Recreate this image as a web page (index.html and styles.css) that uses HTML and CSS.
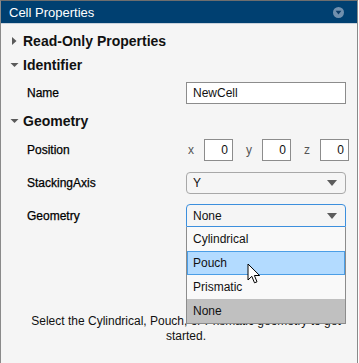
FILE: index.html
```html
<!DOCTYPE html>
<html>
<head>
<meta charset="utf-8">
<link rel="stylesheet" href="styles.css">
</head>
<body>
<div class="panel">
  <div class="titlebar">
    <span class="title">Cell Properties</span>
    <svg class="title-icon" width="11" height="11" viewBox="0 0 11 11"><circle cx="5.5" cy="5.5" r="5.5" fill="#7190ae"/><path d="M2.6 3.8 L8.4 3.8 L5.5 7.6 Z" fill="#0e3d68"/></svg>
  </div>
  <div class="content">
    <div class="section-head">
      <svg class="caret" width="10" height="10" viewBox="0 0 10 10"><path d="M2 1 L6.5 5 L2 9 Z" fill="#5a5a5a"/></svg>
      <span>Read-Only Properties</span>
    </div>
    <div class="section-head">
      <svg class="caret" width="10" height="10" viewBox="0 0 10 10"><path d="M0.5 3 L8.5 3 L4.5 7 Z" fill="#5a5a5a"/></svg>
      <span>Identifier</span>
    </div>
    <div class="row row-name">
      <span class="label">Name</span>
      <div class="textbox">NewCell</div>
    </div>
    <div class="section-head section-geo">
      <svg class="caret" width="10" height="10" viewBox="0 0 10 10"><path d="M0.5 3 L8.5 3 L4.5 7 Z" fill="#5a5a5a"/></svg>
      <span>Geometry</span>
    </div>
    <div class="row row-pos">
      <span class="label">Position</span>
      <div class="xyz">
        <span class="axis">x</span><div class="numbox">0</div>
        <span class="axis">y</span><div class="numbox">0</div>
        <span class="axis">z</span><div class="numbox">0</div>
      </div>
    </div>
    <div class="row row-stack">
      <span class="label">StackingAxis</span>
      <div class="select">
        <span>Y</span>
        <svg width="10" height="8" viewBox="0 0 10 8"><path d="M0 1 L10 1 L5 7 Z" fill="#5c5c5c"/></svg>
      </div>
    </div>
    <div class="row row-geom">
      <span class="label">Geometry</span>
      <div class="select-wrap">
        <div class="select open">
          <span>None</span>
          <svg width="10" height="8" viewBox="0 0 10 8"><path d="M0 1 L10 1 L5 7 Z" fill="#5c5c5c"/></svg>
        </div>
        <ul class="menu">
          <li>Cylindrical</li>
          <li class="hover">Pouch</li>
          <li>Prismatic</li>
          <li class="selected">None</li>
        </ul>
        <svg class="cursor" width="14" height="22" viewBox="0 0 14 22"><path d="M1 1 L1 17 L4.8 13.3 L7.5 19.8 L10 18.8 L7.4 12.5 L12.6 12.5 Z" fill="#ffffff" stroke="#000000" stroke-width="1" stroke-linejoin="miter"/></svg>
      </div>
    </div>
    <p class="message">Select the Cylindrical, Pouch, or Prismatic geometry to get started.</p>
  </div>
</div>
</body>
</html>
```

FILE: styles.css
```css
html, body {
  margin: 0;
  padding: 0;
  background: #ffffff;
}
body {
  font-family: "Liberation Sans", Arial, sans-serif;
  color: #111111;
}
.panel {
  width: 356px;
  height: 362px;
  border-top: 1px solid #6e6e6e;
  border-left: 1px solid #8a8a8a;
  border-right: 1px solid #8a8a8a;
  background: #f5f5f5;
  overflow: hidden;
}
.titlebar {
  height: 22px;
  background: #004071;
  display: flex;
  align-items: center;
  justify-content: space-between;
  padding: 0 13px 0 8px;
  border-bottom: 1px solid #c9d2dc;
}
.title {
  color: #ffffff;
  font-size: 13px;
}
.title-icon {
  display: block;
}
.content {
  padding-top: 5px;
}
.section-head {
  height: 24px;
  display: flex;
  align-items: center;
  font-size: 14px;
  font-weight: bold;
  color: #111111;
  padding-left: 9px;
}
.caret {
  display: block;
  width: 10px;
  margin-right: 3px;
}
.row {
  display: flex;
  align-items: center;
  height: 22px;
  font-size: 12px;
}
.label {
  width: 159px;
  padding-left: 26px;
  color: #000000;
  -webkit-text-stroke: 0.25px #000000;
}
.row-name { margin-top: 5px; }
.section-geo { margin-top: 5px; }
.row-pos { margin-top: 6px; }
.row-stack { margin-top: 11px; }
.row-geom { margin-top: 10px; height: 23px; }
.textbox {
  width: 152px;
  height: 20px;
  border: 1px solid #8c8c8c;
  background: #ffffff;
  display: flex;
  align-items: center;
  padding-left: 6px;
  color: #111111;
}
.xyz {
  display: flex;
  align-items: center;
}
.axis {
  width: 16px;
  padding-left: 2px;
  color: #555555;
  font-size: 12px;
}
.axis + .numbox { margin-right: 11px; }
.numbox {
  width: 23px;
  height: 20px;
  border: 1px solid #8c8c8c;
  background: #ffffff;
  display: flex;
  align-items: center;
  justify-content: flex-end;
  padding-right: 4px;
  color: #111111;
}
.numbox:last-child { margin-right: 0; }
.select-wrap {
  position: relative;
}
.select {
  height: 20px;
  border: 1px solid #a8a8a8;
  border-radius: 4px;
  background: #f5f5f5;
  display: flex;
  align-items: center;
  justify-content: space-between;
  padding: 0 8px 0 6px;
  box-sizing: content-box;
  width: 144px;
  color: #111111;
}
.select.open {
  height: 21px;
  border-color: #3c8fdd;
  border-radius: 4px 4px 0 0;
}
.menu {
  position: absolute;
  left: 0;
  top: 23px;
  width: 158px;
  margin: 0;
  padding: 0;
  list-style: none;
  border: 1px solid #8c8c8c;
  border-top: none;
  background: #f9f9f9;
  z-index: 2;
}
.menu li {
  height: 24px;
  line-height: 24px;
  padding-left: 6px;
  box-sizing: border-box;
  color: #111111;
}
.menu li.hover {
  background: #b3dbff;
  border: 1px solid #4b9ee6;
  padding-left: 5px;
  line-height: 22px;
}
.menu li.selected {
  background: #c0c0c0;
}
.cursor {
  position: absolute;
  left: 61px;
  top: 59px;
  z-index: 3;
}
.message {
  margin: 87px 0 0 0;
  padding: 0 8px 0 22px;
  font-size: 12px;
  line-height: 15px;
  text-align: center;
  color: #111111;
}
```
